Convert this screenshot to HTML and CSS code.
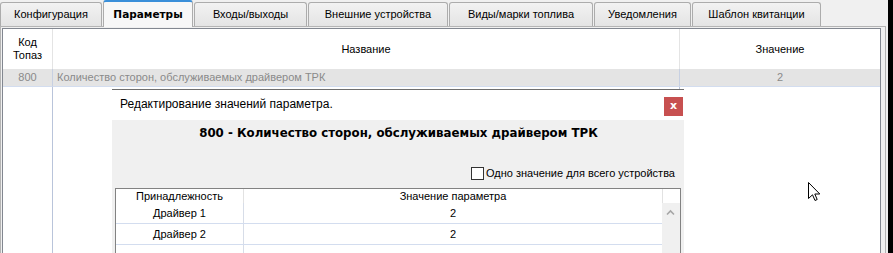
FILE: index.html
```html
<!DOCTYPE html>
<html lang="ru">
<head>
    <meta charset="UTF-8">
    <title>Параметры</title>
    <link rel="stylesheet" href="styles.css">
</head>
<body>
    <div class="window">
        <div class="main">
            <div class="tabs">
                <div class="tab">Конфигурация</div>
                <div class="tab active">Параметры</div>
                <div class="tab">Входы/выходы</div>
                <div class="tab">Внешние устройства</div>
                <div class="tab">Виды/марки топлива</div>
                <div class="tab">Уведомления</div>
                <div class="tab">Шаблон квитанции</div>
            </div>

            <div class="panel">
                <div class="grid">
                    <div class="grid-head">
                        <div class="cell">Код<br>Топаз</div>
                        <div class="cell">Название</div>
                        <div class="cell">Значение</div>
                    </div>
                    <div class="grid-row selected">
                        <div class="cell">800</div>
                        <div class="cell name">Количество сторон, обслуживаемых драйвером ТРК</div>
                        <div class="cell">2</div>
                    </div>
                    <div class="grid-fill">
                        <div class="cell"></div>
                        <div class="cell"></div>
                        <div class="cell"></div>
                    </div>
                </div>
            </div>

            <!-- окно редактирования поверх таблицы -->
            <div class="dialog">
                <div class="dialog-title">
                    Редактирование значений параметра.
                    <div class="close">x</div>
                </div>
                <div class="dialog-body">
                    <div class="dialog-heading">800 - Количество сторон, обслуживаемых драйвером ТРК</div>
                    <label class="check-row">
                        <span class="checkbox"></span>
                        Одно значение для всего устройства
                    </label>
                    <div class="values">
                        <div class="values-head">
                            <div class="vcell">Принадлежность</div>
                            <div class="vcell">Значение параметра</div>
                            <div class="vcell"></div>
                        </div>
                        <div class="values-body">
                            <div class="values-rows">
                                <div class="vrow">
                                    <div class="vcell">Драйвер 1</div>
                                    <div class="vcell">2</div>
                                </div>
                                <div class="vrow">
                                    <div class="vcell">Драйвер 2</div>
                                    <div class="vcell">2</div>
                                </div>
                                <div class="vrow">
                                    <div class="vcell"></div>
                                    <div class="vcell"></div>
                                </div>
                            </div>
                            <div class="scrollbar">
                                <svg width="17" height="17" viewBox="0 0 17 17">
                                    <path d="M5 10.5 L8.5 7 L12 10.5" fill="none" stroke="#a6a6a6" stroke-width="1.6"/>
                                </svg>
                            </div>
                        </div>
                    </div>
                </div>
            </div>

            <svg class="cursor" width="13" height="20" viewBox="0 0 13 20">
                <path d="M0.5 0.5 L0.5 16.5 L4.5 12.8 L7 18.5 L9.2 17.5 L6.8 12 L11.8 12 Z" fill="#fff" stroke="#000" stroke-width="1"/>
            </svg>
        </div>
        <div class="edge"></div>
    </div>
</body>
</html>
```

FILE: styles.css
```css
* {
    margin: 0;
    padding: 0;
    box-sizing: border-box;
}

body {
    font-family: 'Liberation Sans', Tahoma, Arial, sans-serif;
    font-size: 11px;
    color: #000;
    background: #f0f0f0;
    width: 893px;
    height: 253px;
    overflow: hidden;
}

.window {
    display: flex;
    height: 253px;
}

.main {
    position: relative;
    width: 888px;
    height: 100%;
}

.edge {
    flex: 1;
    background: #000;
}

/* вкладки */
.tabs {
    display: grid;
    grid-template-columns: 102px 90px 113px 140px 144px 97px 129px;
    column-gap: 1px;
    align-items: end;
    height: 26px;
    position: relative;
    z-index: 2;
}

.tab {
    height: 24px;
    line-height: 23px;
    text-align: center;
    white-space: nowrap;
    border: 1px solid #acacac;
    border-bottom: none;
    border-radius: 3px 3px 0 0;
    background: linear-gradient(#f2f2f2, #e4e4e4);
}

.tab.active {
    height: 27px;
    margin-bottom: -1px;
    line-height: 25px;
    font-family: 'DejaVu Sans', Tahoma, sans-serif;
    font-size: 10.5px;
    font-weight: bold;
    background: #f7f7f7;
    border-top: 2px solid #3a8fd9;
}

/* таблица параметров */
.panel {
    height: 227px;
    margin-right: 2px;
    border: 1px solid #b4b4b4;
    border-bottom: none;
    padding: 1px 4px 0 1px;
}

.grid {
    height: 100%;
    background: #fff;
    border: 1px solid #828790;
    border-bottom: none;
    display: flex;
    flex-direction: column;
}

.grid-head,
.grid-row,
.grid-fill {
    display: grid;
    grid-template-columns: 50px 627px 1fr;
}

.grid-head .cell {
    height: 40px;
    display: flex;
    align-items: center;
    justify-content: center;
    text-align: center;
    line-height: 13px;
    border-right: 1px solid #e4e4e4;
}

.grid-row .cell {
    height: 18px;
    line-height: 17px;
    text-align: center;
    background: #e4e4e4;
    color: #8a8a8a;
    border-bottom: 1px solid #d3ddef;
    border-right: 1px solid #c7d0e2;
}

.grid-row .cell.name {
    text-align: left;
    padding-left: 4px;
    white-space: nowrap;
}

.grid-fill {
    flex: 1;
}

.grid-fill .cell {
    border-right: 1px solid #b9c4da;
}

.grid-head .cell:last-child,
.grid-row .cell:last-child,
.grid-fill .cell:last-child {
    border-right: none;
}

/* окно редактирования */
.dialog {
    position: absolute;
    left: 112px;
    top: 89px;
    width: 572px;
    height: 180px;
    background: #f0f0f0;
    border-top: 1px solid #6f6f6f;
    z-index: 3;
}

.dialog-title {
    position: relative;
    height: 30px;
    line-height: 29px;
    padding-left: 8px;
    background: #fff;
    font-size: 12px;
}

.close {
    position: absolute;
    right: 1px;
    top: 7px;
    width: 19px;
    height: 19px;
    line-height: 17px;
    text-align: center;
    background: #c75050;
    color: #fff;
    font-family: 'DejaVu Sans', sans-serif;
    font-weight: bold;
    font-size: 11px;
}

.dialog-body {
    padding: 5px 2px 0 3px;
}

.dialog-heading {
    height: 16px;
    line-height: 16px;
    text-align: center;
    font-family: 'DejaVu Sans', Tahoma, sans-serif;
    font-weight: bold;
    font-size: 11.8px;
    white-space: nowrap;
}

.check-row {
    display: flex;
    align-items: center;
    justify-content: flex-end;
    gap: 2px;
    height: 14px;
    margin-top: 25px;
    padding-right: 7px;
}

.checkbox {
    width: 13px;
    height: 13px;
    border: 1px solid #333;
    background: #fff;
}

.values {
    margin-top: 8px;
    width: 566px;
    background: #fff;
    border: 1px solid #828282;
    border-bottom: none;
    height: 80px;
}

.values-head {
    display: grid;
    grid-template-columns: 128px 419px 1fr;
    height: 14px;
}

.values-head .vcell {
    line-height: 14px;
    text-align: center;
    border-right: 1px solid #e2e2e2;
}

.values-head .vcell:last-child {
    border-right: none;
}

.values-body {
    display: flex;
}

.values-rows {
    width: 546px;
}

.vrow {
    display: grid;
    grid-template-columns: 128px 1fr;
    height: 21px;
    border-bottom: 1px solid #d3ddef;
}

.vrow .vcell {
    line-height: 20px;
    text-align: center;
}

.vrow .vcell:first-child {
    border-right: 1px solid #d7dde8;
}

.scrollbar {
    flex: 1;
    height: 70px;
    background: #f0f0f0;
    padding-top: 1px;
}

.scrollbar svg {
    display: block;
}

.cursor {
    position: absolute;
    left: 808px;
    top: 182px;
    z-index: 4;
}
```
